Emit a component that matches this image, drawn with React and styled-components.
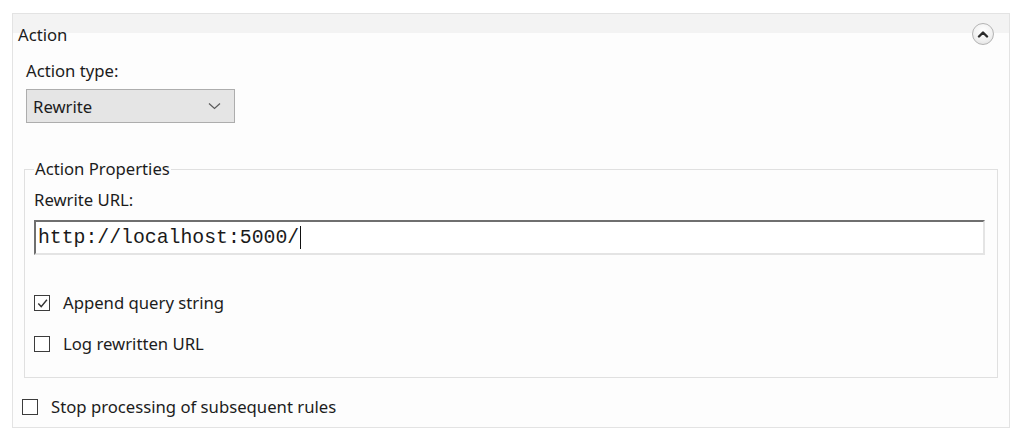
import React from 'react';
import styled, { createGlobalStyle } from 'styled-components';

const GlobalStyle = createGlobalStyle`
  body {
    margin: 0;
    background: #ffffff;
    font-family: "Noto Sans", "Open Sans", sans-serif;
    color: #1c1c1c;
  }
`;

const ChevronUp = () => (
  <svg width="12" height="8" viewBox="0 0 12 8">
    <path d="M2 6.5 L6 2.5 L10 6.5" fill="none" stroke="#2b2b2b" strokeWidth="2.4" strokeLinecap="round" strokeLinejoin="round" />
  </svg>
);

const ChevronDown = () => (
  <svg width="13" height="8" viewBox="0 0 13 8">
    <path d="M1 1.5 L6.5 6.5 L12 1.5" fill="none" stroke="#5a5a5a" strokeWidth="1.2" />
  </svg>
);

const CheckMark = () => (
  <svg width="13" height="13" viewBox="0 0 13 13">
    <path d="M2.3 6.6 L5.2 9.6 L10.9 2.7" fill="none" stroke="#333" strokeWidth="1.4" />
  </svg>
);

const CheckRow = ({ checked, children }) => (
  <Row>
    <Box>{checked && <CheckMark />}</Box>
    <span>{children}</span>
  </Row>
);

const App = () => {
  return (
    <>
      <GlobalStyle />
      <Page>
        <Panel>
          <Header>
            <Title>Action</Title>
            <Collapse>
              <ChevronUp />
            </Collapse>
          </Header>
          <Body>
            <TypeBlock>
              <Label>Action type:</Label>
              <Select>
                <span>Rewrite</span>
                <ChevronDown />
              </Select>
            </TypeBlock>
            <Group>
              <Legend>Action Properties</Legend>
              <Label>Rewrite URL:</Label>
              <UrlInput>
                http://localhost:5000/<Caret />
              </UrlInput>
              <Checks>
                <CheckRow checked>Append query string</CheckRow>
                <CheckRow>Log rewritten URL</CheckRow>
              </Checks>
            </Group>
            <StopRow>
              <CheckRow>Stop processing of subsequent rules</CheckRow>
            </StopRow>
          </Body>
        </Panel>
      </Page>
    </>
  );
};

export default App;

const Page = styled.div`
  padding: 13px 14px 0 12px;
`;

const Panel = styled.div`
  width: 996px;
  height: 413px;
  border: 1px solid #e3e3e3;
  background: #fdfdfd;
`;

const Header = styled.div`
  height: 40px;
  display: flex;
  align-items: center;
  justify-content: space-between;
  padding: 0 15px 0 5px;
  background: linear-gradient(#f3f3f3 0, #f3f3f3 19px, transparent 19px);
`;

const Title = styled.div`
  font-size: 16.7px;
  line-height: 22px;
  margin-top: 1px;
`;

const Collapse = styled.div`
  width: 20px;
  height: 20px;
  border-radius: 50%;
  border: 1px solid #b4b4b4;
  background: radial-gradient(circle at 50% 35%, #ffffff 0%, #f2f2f2 55%, #dcdcdc 100%);
  display: flex;
  align-items: center;
  justify-content: center;
  margin-top: -1px;
`;

const Body = styled.div`
  padding: 0 11px 0 9px;
`;

const TypeBlock = styled.div`
  padding: 6px 0 0 4px;
`;

const Label = styled.div`
  font-size: 16.7px;
  line-height: 22px;
`;

const Select = styled.div`
  margin-top: 7px;
  box-sizing: border-box;
  width: 209px;
  height: 34px;
  border: 1px solid #adadad;
  background: #e5e5e5;
  display: flex;
  align-items: center;
  justify-content: space-between;
  padding: 0 13px 0 6px;
  font-size: 16.7px;
`;

const Group = styled.fieldset`
  margin: 35px 0 0 2px;
  padding: 0 12px 22px 9px;
  border: 1px solid #e0e0e0;
  min-width: 0;
  ${Label} {
    margin-top: 9px;
  }
`;

const Legend = styled.legend`
  padding: 0 1px;
  font-size: 16.7px;
  line-height: 22px;
`;

const UrlInput = styled.div`
  margin-top: 9px;
  height: 35px;
  box-sizing: border-box;
  border-top: 2px solid #6f6f6f;
  border-left: 2px solid #6f6f6f;
  border-right: 2px solid #e4e4e4;
  border-bottom: 2px solid #e4e4e4;
  background: #ffffff;
  display: flex;
  align-items: center;
  padding-left: 2px;
  font-family: "Liberation Mono", "Courier New", monospace;
  font-size: 19.8px;
  color: #1a1a1a;
`;

const Caret = styled.span`
  display: inline-block;
  width: 1px;
  height: 23px;
  background: #111;
  margin-left: 1px;
`;

const Checks = styled.div`
  margin-top: 37px;
  display: flex;
  flex-direction: column;
  gap: 19px;
`;

const Row = styled.div`
  display: flex;
  align-items: center;
  gap: 13px;
  font-size: 16.7px;
  line-height: 22px;
`;

const Box = styled.div`
  flex-shrink: 0;
  width: 16px;
  height: 16px;
  box-sizing: border-box;
  border: 1px solid #3c3c3c;
  background: #ffffff;
  display: flex;
  align-items: center;
  justify-content: center;
`;

const StopRow = styled.div`
  margin-top: 18px;
`;
